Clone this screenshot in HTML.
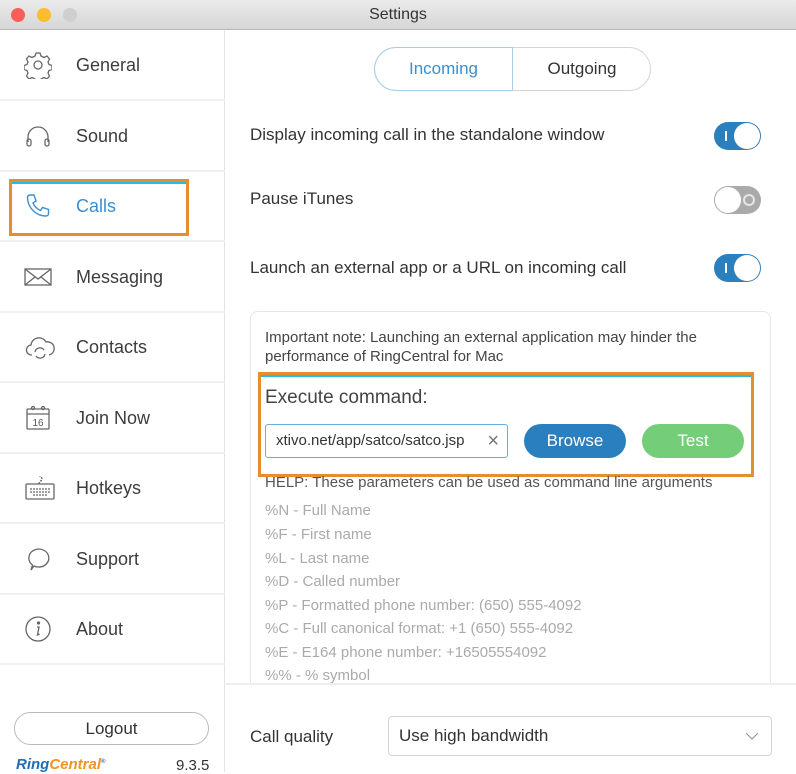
<!DOCTYPE html>
<html><head><meta charset="utf-8"><style>
*{box-sizing:border-box;margin:0;padding:0}
body{width:796px;height:772px;overflow:hidden;background:#fff;font-family:"Liberation Sans",sans-serif;color:#3a3a3a;position:relative}
.tb{position:absolute;left:0;top:0;width:796px;height:30px;background:linear-gradient(#ebebeb,#d6d6d6);border-bottom:1px solid #b8b8b8;text-align:center;font-size:16px;line-height:30px;color:#333}
.dot{position:absolute;top:8px;width:14px;height:14px;border-radius:50%}
.side{position:absolute;left:0;top:30px;width:225px;height:742px;border-right:1px solid #e4e4e4}
.row{position:absolute;left:0;width:225px;height:71px;border-bottom:2px solid #f0f0f0}
.row span{position:absolute;left:76px;top:25px;font-size:18px;color:#3d3d3d}
.row svg{position:absolute;left:24px;top:21px}
.abs{position:absolute}
.tog{position:absolute;left:714px;width:47px;height:28px;border-radius:14px}
.tog.on{background:#2a7fbf}
.tog.on::after{content:"";position:absolute;right:1px;top:1px;width:26px;height:26px;border-radius:50%;background:#fff;box-shadow:0 0 1px #888}
.tog.on::before{content:"";position:absolute;left:11px;top:9px;width:2px;height:10px;background:#fff}
.tog.off{background:#aaa}
.tog.off::after{content:"";position:absolute;left:1px;top:1px;width:26px;height:26px;border-radius:50%;background:#fff}
.tog.off::before{content:"";position:absolute;right:6px;top:8px;width:8px;height:8px;border:2px solid #fff;border-radius:50%;opacity:.7}
.lbl{position:absolute;left:250px;font-size:17px;color:#333}
.hl{position:absolute;left:265px;font-size:15px;color:#aaa}
</style></head><body>
<div class="tb">Settings
<div class="dot" style="left:11px;background:#fc5f57"></div>
<div class="dot" style="left:37px;background:#fdbb2e"></div>
<div class="dot" style="left:63px;background:#cfcfcf"></div>
</div>
<div class="side">
<div class="row" style="top:0"><svg width="28" height="28" viewBox="0 0 28 28" fill="none" stroke="#666" stroke-width="1.3"><circle cx="14" cy="14" r="4"/><path d="M12 2h4l1 3 3 1.5 3-1.5 2.5 3-1.5 3 1 2.5 3 1v4l-3 1-1 2.5 1.5 3-2.5 3-3-1.5-3 1.5-1 3h-4l-1-3-3-1.5-3 1.5-2.5-3 1.5-3-1-2.5-3-1v-4l3-1 1-2.5-1.5-3 2.5-3 3 1.5 3-1.5z"/></svg><span>General</span></div>
<div class="row" style="top:71px"><svg width="28" height="28" viewBox="0 0 28 28" fill="none" stroke="#666" stroke-width="1.3"><path d="M4 20v-5a10 10 0 0 1 20 0v5"/><rect x="3" y="17" width="4" height="7" rx="2"/><rect x="21" y="17" width="4" height="7" rx="2"/></svg><span>Sound</span></div>
<div class="row" style="top:141px"><svg width="28" height="28" viewBox="0 0 28 28" fill="none" stroke="#3a8fd0" stroke-width="1.4"><path d="M6 3l4 0 2 6-3 2c1.5 3.5 4 6 7.5 7.5l2-3 6 2v4c0 1.5-1 2.5-2.5 2.5C12 24 4 16 3.5 6 3.5 4 4.5 3 6 3z"/></svg><span style="color:#3a8fd0">Calls</span></div>
<div class="row" style="top:212px"><svg width="28" height="28" viewBox="0 0 28 28" fill="none" stroke="#666" stroke-width="1.3"><rect x="1" y="6" width="26" height="16"/><path d="M1 6l13 10 13-10M1 22l10-8M27 22l-10-8"/></svg><span>Messaging</span></div>
<div class="row" style="top:282px"><svg width="32" height="28" viewBox="0 0 32 28" fill="none" stroke="#666" stroke-width="1.3"><path d="M8 22a5 5 0 0 1-1-10 8 8 0 0 1 15-3 6 6 0 0 1 3 13"/><path d="M11 19a5 5 0 0 1 9-2M21 21a5 5 0 0 1-9 2"/></svg><span>Contacts</span></div>
<div class="row" style="top:353px"><svg width="28" height="28" viewBox="0 0 28 28" fill="none" stroke="#666" stroke-width="1.3"><rect x="3" y="5" width="22" height="20" rx="1"/><path d="M3 10h22"/><circle cx="9" cy="4" r="1.5"/><circle cx="19" cy="4" r="1.5"/><text x="14" y="22" font-size="10" text-anchor="middle" fill="#555" stroke="none" font-family="Liberation Sans">16</text></svg><span>Join Now</span></div>
<div class="row" style="top:423px"><svg width="32" height="28" viewBox="0 0 32 28" fill="none" stroke="#666" stroke-width="1.3"><rect x="2" y="10" width="28" height="15" rx="1"/><path d="M15 10c0-3 3-3 3-5s-2-2-2-3M6 15h20M6 18h20M9 21h14" stroke-dasharray="2 1"/></svg><span>Hotkeys</span></div>
<div class="row" style="top:494px"><svg width="28" height="28" viewBox="0 0 28 28" fill="none" stroke="#666" stroke-width="1.3"><path d="M7 25l1.5-5A10 9 0 1 1 14 22a11 9 0 0 1-4-1z"/></svg><span>Support</span></div>
<div class="row" style="top:564px"><svg width="28" height="28" viewBox="0 0 28 28" fill="none" stroke="#666" stroke-width="1.3"><circle cx="14" cy="14" r="12"/><circle cx="14.5" cy="8" r="1" fill="#666"/><path d="M13 12h2l-1.5 8 2-1"/></svg><span>About</span></div>
<div class="abs" style="left:9px;top:149px;width:180px;height:57px;border:3px solid #e2902f;box-shadow:inset 0 2px 0 #2ab7f0"></div>
<div class="abs" style="left:14px;top:682px;width:195px;height:33px;border:1px solid #bbb;border-radius:17px;text-align:center;font-size:17px;line-height:31px;color:#333">Logout</div>
<div class="abs" style="left:16px;top:726px;font-size:15px;font-weight:bold;font-style:italic;color:#1f6db7">Ring<span style="color:#f39321">Central</span><sup style="font-size:6px">®</sup></div>
<div class="abs" style="left:176px;top:727px;font-size:15px;color:#333">9.3.5</div>
</div>
<div class="abs" style="left:374px;top:47px;width:277px;height:44px;border:1px solid #d5d5d5;border-radius:22px"></div>
<div class="abs" style="left:374px;top:47px;width:139px;height:44px;border:1px solid #a9cde7;border-radius:22px 0 0 22px;text-align:center;line-height:42px;font-size:17px;color:#3a8fd0">Incoming</div>
<div class="abs" style="left:513px;top:47px;width:138px;height:44px;text-align:center;line-height:44px;font-size:17px;color:#333">Outgoing</div>
<div class="lbl" style="top:125px">Display incoming call in the standalone window</div>
<div class="tog on" style="top:122px"></div>
<div class="lbl" style="top:189px">Pause iTunes</div>
<div class="tog off" style="top:186px"></div>
<div class="lbl" style="top:258px">Launch an external app or a URL on incoming call</div>
<div class="tog on" style="top:254px"></div>
<div class="abs" style="left:250px;top:311px;width:521px;height:380px;border:1px solid #e6e6e6;border-radius:8px"></div>
<div class="abs" style="left:265px;top:328px;font-size:15px;color:#444;line-height:19px;width:480px">Important note: Launching an external application may hinder the performance of RingCentral for Mac</div>
<div class="abs" style="left:258px;top:372px;width:496px;height:105px;border:3px solid #e2902f;box-shadow:inset 0 2px 0 #2ab7f0"></div>
<div class="abs" style="left:265px;top:387px;font-size:19px;color:#444">Execute command:</div>
<div class="abs" style="left:265px;top:424px;width:243px;height:34px;border:1px solid #6aaedf;border-radius:3px;font-size:15px;line-height:32px;padding-left:10px;color:#333;overflow:hidden;white-space:nowrap">xtivo.net/app/satco/satco.jsp<span style="position:absolute;right:8px;top:0;color:#777;font-size:20px">×</span></div>
<div class="abs" style="left:524px;top:424px;width:102px;height:34px;border-radius:17px;background:#2a7fbf;color:#fff;text-align:center;line-height:34px;font-size:17px">Browse</div>
<div class="abs" style="left:642px;top:424px;width:102px;height:34px;border-radius:17px;background:#74cd78;color:#fff;text-align:center;line-height:34px;font-size:17px">Test</div>
<div class="abs" style="left:265px;top:474px;font-size:15px;color:#555">HELP: These parameters can be used as command line arguments</div>
<div class="hl" style="top:502px">%N - Full Name</div>
<div class="hl" style="top:526px">%F - First name</div>
<div class="hl" style="top:550px">%L - Last name</div>
<div class="hl" style="top:573px">%D - Called number</div>
<div class="hl" style="top:597px">%P - Formatted phone number: (650) 555-4092</div>
<div class="hl" style="top:620px">%C - Full canonical format: +1 (650) 555-4092</div>
<div class="hl" style="top:644px">%E - E164 phone number: +16505554092</div>
<div class="hl" style="top:667px">%% - % symbol</div>
<div class="abs" style="left:226px;top:683px;width:570px;height:89px;background:#fff;border-top:2px solid #eee"></div>
<div class="lbl" style="top:727px">Call quality</div>
<div class="abs" style="left:388px;top:716px;width:384px;height:40px;border:1px solid #d5d5d5;border-radius:4px;font-size:17px;line-height:38px;padding-left:10px;color:#333">Use high bandwidth<svg style="position:absolute;right:12px;top:15px" width="14" height="8" viewBox="0 0 14 8" fill="none" stroke="#999" stroke-width="1.2"><path d="M1 1l6 6 6-6"/></svg></div>
</body></html>
